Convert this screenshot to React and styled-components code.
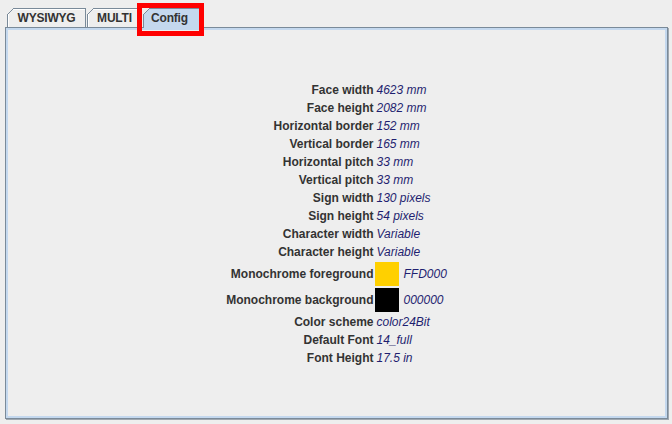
import React, { useState } from 'react'
import styled, { createGlobalStyle } from 'styled-components'

const GlobalStyle = createGlobalStyle`
    html, body {
        margin: 0;
        padding: 0;
        background: #eeeeee;
        font-family: "Liberation Sans", Arial, sans-serif;
    }
`

const tabs = [
    { name: 'WYSIWYG', width: 79 },
    { name: 'MULTI', width: 55 },
    { name: 'Config', width: 57 },
]

const rows = [
    ['Face width', '4623 mm'],
    ['Face height', '2082 mm'],
    ['Horizontal border', '152 mm'],
    ['Vertical border', '165 mm'],
    ['Horizontal pitch', '33 mm'],
    ['Vertical pitch', '33 mm'],
    ['Sign width', '130 pixels'],
    ['Sign height', '54 pixels'],
    ['Character width', 'Variable'],
    ['Character height', 'Variable'],
    ['Monochrome foreground', 'FFD000', '#ffd000'],
    ['Monochrome background', '000000', '#000000'],
    ['Color scheme', 'color24Bit'],
    ['Default Font', '14_full'],
    ['Font Height', '17.5 in'],
]

const App = () => {
    const [active, setActive] = useState(2)

    return (
        <Page>
            <GlobalStyle />
            <TabStrip>
                {tabs.map((t, i) => (
                    <Tab key={t.name} width={t.width} selected={i === active} onClick={() => setActive(i)}>
                        {t.name}
                    </Tab>
                ))}
            </TabStrip>
            <Panel>
                <ConfigGrid>
                    {rows.map(([label, value, swatch]) => (
                        <React.Fragment key={label}>
                            <Label tall={!!swatch}>{label}</Label>
                            <Value tall={!!swatch}>
                                {swatch && <Swatch color={swatch} />}
                                {value}
                            </Value>
                        </React.Fragment>
                    ))}
                </ConfigGrid>
            </Panel>
            <Highlight />
        </Page>
    )
}

const Page = styled.div`
    position: relative;
    width: 672px;
    height: 424px;
    box-sizing: border-box;
    padding: 8px 4px 5px 5px;
    display: flex;
    flex-direction: column;
    background: #eeeeee;
`

const TabStrip = styled.div`
    display: flex;
    height: 19px;
    padding-left: 2px;
    position: relative;
    z-index: 1;
`

const Tab = styled.div`
    position: relative;
    box-sizing: border-box;
    width: ${p => p.width}px;
    height: ${p => (p.selected ? '20px' : '19px')};
    padding-right: ${p => (p.selected ? '4px' : '0')};
    margin-right: 1px;
    border: 1px solid #7a8a99;
    border-bottom: none;
    background: ${p => (p.selected ? '#c4d8ee' : '#eeeeee')};
    box-shadow: ${p => (p.selected ? 'none' : 'inset 1px 1px 0 #ffffff')};
    color: #333333;
    font-size: 12px;
    font-weight: bold;
    line-height: 18px;
    text-align: center;
    letter-spacing: -0.2px;
    cursor: default;
    user-select: none;

    &::before {
        content: '';
        position: absolute;
        top: -1px;
        left: -1px;
        width: 7px;
        height: 7px;
        background: linear-gradient(
            135deg,
            #eeeeee 0 calc(50% - 0.7px),
            #7a8a99 calc(50% - 0.7px) calc(50% + 0.7px),
            transparent calc(50% + 0.7px)
        );
    }
`

const Panel = styled.div`
    flex: 1;
    box-sizing: border-box;
    border: 1px solid #7a8a99;
    box-shadow: inset 0 0 0 2px #c4d8ee, 1px 1px 0 #a0a8b0;
    display: flex;
    align-items: center;
    justify-content: center;
`

const ConfigGrid = styled.div`
    display: grid;
    grid-template-columns: auto auto;
    column-gap: 3px;
    align-items: center;
    padding-top: 2px;
    font-size: 12px;
`

const Label = styled.div`
    text-align: right;
    font-weight: bold;
    color: #333333;
    line-height: ${p => (p.tall ? '26px' : '18px')};
`

const Value = styled.div`
    display: flex;
    align-items: center;
    gap: 4px;
    height: ${p => (p.tall ? '26px' : '18px')};
    font-style: italic;
    color: #1f1f70;
`

const Swatch = styled.span`
    width: 24px;
    height: 24px;
    margin-left: -1px;
    background: ${p => p.color};
`

// red annotation frame around the selected tab
const Highlight = styled.div`
    position: absolute;
    left: 137px;
    top: 3px;
    width: 67px;
    height: 33px;
    box-sizing: border-box;
    border: 5px solid #ff0000;
    z-index: 2;
    pointer-events: none;
`

export default App
